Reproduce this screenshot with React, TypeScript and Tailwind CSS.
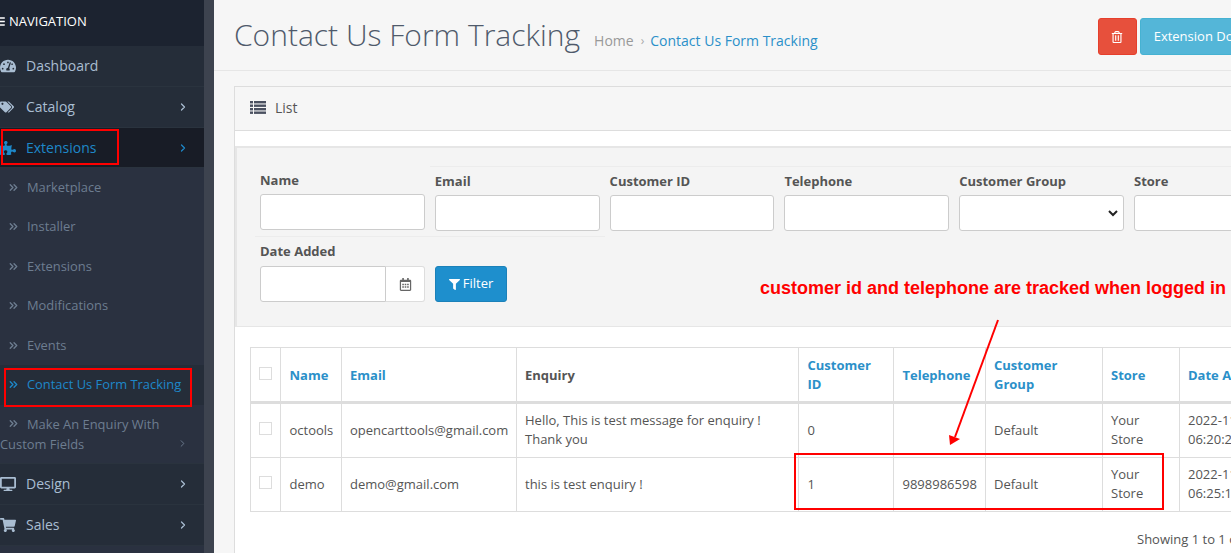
import React from "react";
import { FaTachometerAlt, FaTags, FaPuzzlePiece, FaDesktop, FaShoppingCart, FaRegTrashAlt, FaRegCalendarAlt, FaFilter, FaBars } from "react-icons/fa";
import { ChevronRight, ChevronsRight } from "lucide-react";

function NavItem({ icon, label, arrow, active, h }: { icon: React.ReactNode; label: string; arrow?: boolean; active?: boolean; h: string }) {
  return (
    <div className={`flex items-center ${h} border-b border-[#2a333e] ${active ? "bg-[#181c26] text-[#1e88c9]" : "bg-[#252d39] text-[#a9bdd2]"}`}>
      <span className="w-[26px] shrink-0 text-[16px]">{icon}</span>
      <span className={`text-[14px] flex-1 ${active ? "" : "pb-[2px]"}`}>{label}</span>
      {arrow && <ChevronRight size={12} strokeWidth={2.5} className="mr-[15px]" />}
    </div>
  );
}

function SubItem({ label, active }: { label: string; active?: boolean }) {
  return (
    <div className={`flex items-center h-[39.5px] pl-[7px] text-[12.9px] ${active ? "text-[#1e88c9] bg-[#252d39]" : "text-[#6d7d90]"}`}>
      <ChevronsRight size={13} strokeWidth={2.5} className="mr-[7px]" />
      <span>{label}</span>
    </div>
  );
}

function ListIcon() {
  return (
    <svg width="16" height="13" viewBox="0 0 16 13" className="mr-[9px] text-[#4a5060]" fill="currentColor">
      <rect x="0" y="0" width="3" height="2.4" />
      <rect x="4" y="0" width="12" height="2.4" />
      <rect x="0" y="3.5" width="3" height="2.4" />
      <rect x="4" y="3.5" width="12" height="2.4" />
      <rect x="0" y="7" width="3" height="2.4" />
      <rect x="4" y="7" width="12" height="2.4" />
      <rect x="0" y="10.5" width="3" height="2.4" />
      <rect x="4" y="10.5" width="12" height="2.4" />
    </svg>
  );
}

function Field({ label, lined, select }: { label: string; lined?: boolean; select?: boolean }) {
  return (
    <div className={`w-[174.8px] shrink-0 px-[5px] ${lined ? "border-t border-[#ececec] pt-[6px]" : "pt-[6px]"}`}>
      <div className="h-[22px] leading-[17px] text-[13px] font-bold text-[#555]">{label}</div>
      {select ? (
        <div className="h-[36px] bg-white border border-[#ccc] rounded-[3px] flex items-center justify-end pr-[5px] text-[#333]">
          <svg width="10" height="7" viewBox="0 0 10 7"><path d="M1 1l4 4 4-4" fill="none" stroke="#222" strokeWidth="2" /></svg>
        </div>
      ) : (
        <div className="h-[36px] bg-white border border-[#ccc] rounded-[3px]" />
      )}
    </div>
  );
}

const th = "border border-[#ddd] border-b-[3px] pr-[9px] pt-[1px] text-[13px] font-bold text-left leading-[19px]";
const td = "border border-[#ddd] pr-[9px] pb-[1px] text-[13px] text-[#555] leading-[19px]";
const pa = " pl-[8.5px]";
const pb = " pl-[8px]";
const cb = "block w-[13px] h-[13px] border border-[#ddd] bg-white mx-auto";

export default function App() {
  return (
    <div className="w-[1231px] h-[553px] overflow-hidden relative flex bg-[#f6f6f6] text-[#555]" style={{ fontFamily: '"Open Sans", sans-serif' }}>
      <aside className="w-[214px] shrink-0 border-r-[10px] border-[#3d434f] bg-[#2a3140] overflow-hidden">
        <div className="h-[46px] bg-[#1c2330] text-white text-[13px] flex items-center pb-[3px]">
          <FaBars className="w-[12px] h-[11px] -ml-[6px] mr-[3px]" />
          <span>NAVIGATION</span>
        </div>
        <NavItem icon={<FaTachometerAlt />} label="Dashboard" h="h-[41px]" />
        <NavItem icon={<FaTags className="text-[14px]" />} label="Catalog" arrow h="h-[41px]" />
        <NavItem icon={<FaPuzzlePiece className="text-[#1e88c9]" />} label="Extensions" arrow active h="h-[40px]" />
        <div className="bg-[#2a3140] -mt-[0.5px]">
          <SubItem label="Marketplace" />
          <SubItem label="Installer" />
          <SubItem label="Extensions" />
          <SubItem label="Modifications" />
          <SubItem label="Events" />
          <SubItem label="Contact Us Form Tracking" active />
          <div className="relative h-[59.5px] pt-[9px] text-[12.9px] leading-[20px] text-[#6d7d90] border-b border-[#2a333e]">
            <div className="pl-[7px] flex items-center">
              <ChevronsRight size={13} strokeWidth={2.5} className="mr-[7px]" />
              <span>Make An Enquiry With</span>
            </div>
            <div className="flex items-center justify-between pr-[16px]">
              <span>Custom Fields</span>
              <ChevronRight size={11} strokeWidth={2} />
            </div>
          </div>
        </div>
        <NavItem icon={<FaDesktop />} label="Design" arrow h="h-[41px]" />
        <NavItem icon={<FaShoppingCart />} label="Sales" arrow h="h-[41px]" />
      </aside>

      <main className="flex-1 min-w-0 overflow-hidden">
        <header className="h-[71px] border-b border-[#e6e6e6] flex items-start whitespace-nowrap pl-[20px]">
          <h1 className="text-[30px] font-light text-[#4f5a6b] leading-[40px] mt-[15px]">Contact Us Form Tracking</h1>
          <div className="text-[14px] mt-[31px] ml-[14px] flex items-center leading-[20px]">
            <span className="text-[#999]">Home</span>
            <span className="text-[#aaa] ml-[7px] mr-[6px] text-[12px]">›</span>
            <span className="text-[#2b90c9]">Contact Us Form Tracking</span>
          </div>
          <div className="flex gap-[3px] mt-[18px] ml-[280px]">
            <div className="w-[39px] h-[37px] bg-[#e7503c] border border-[#e63f2c] rounded-[3px] flex items-center justify-center text-white text-[12px]"><FaRegTrashAlt /></div>
            <div className="h-[37px] px-[13px] bg-[#54b6d8] border border-[#46b2d2] rounded-[3px] flex items-center text-white text-[13px]">Extension Document</div>
          </div>
        </header>

        <section className="mt-[15px] ml-[20px] w-[1100px] border border-[#ddd]">
          <div className="h-[44px] border-b border-[#ddd] flex items-center pl-[15px] pb-[2px] text-[14px] text-[#555]">
            <ListIcon />
            <span>List</span>
          </div>
          <div className="bg-white pt-[15px] pb-[20px]">
            <div className="bg-[#f4f4f4] border-t-2 border-l-2 border-b border-[#e6e6e6] h-[181px] pl-[18px]">
              <div className="flex pt-[18px]">
                <Field label="Name" />
                <Field label="Email" lined />
                <Field label="Customer ID" lined />
                <Field label="Telephone" lined />
                <Field label="Customer Group" lined select />
                <Field label="Store" lined />
              </div>
              <div className="flex mt-[5px]">
                <div className="w-[175px] px-[5px] border-t border-[#ececec] pt-[6px]">
                  <div className="h-[23px] leading-[17px] text-[13px] font-bold text-[#555]">Date Added</div>
                  <div className="flex h-[36px]">
                    <div className="w-[126px] bg-white border border-[#ccc] rounded-l-[3px]" />
                    <div className="flex-1 bg-white border border-l-0 border-[#ddd] rounded-r-[3px] flex items-center justify-center text-[#666] text-[13px]"><FaRegCalendarAlt /></div>
                  </div>
                </div>
                <div className="w-[175px] px-[5px] border-t border-[#ececec] pt-[29px]">
                  <div className="w-[72px] h-[36px] bg-[#1e8fcd] border border-[#1b81b9] rounded-[3px] flex items-center justify-center text-white text-[13px]">
                    <FaFilter className="w-[11px] h-[11px] mr-[3px]" />Filter
                  </div>
                </div>
              </div>
            </div>
            <table className="mt-[20px] ml-[15px] border-collapse table-fixed w-[1099px]">
              <colgroup>
                <col className="w-[30px]" /><col className="w-[61px]" /><col className="w-[175px]" /><col className="w-[282px]" />
                <col className="w-[95px]" /><col className="w-[92px]" /><col className="w-[117px]" /><col className="w-[77px]" /><col className="w-[170px]" />
              </colgroup>
              <thead>
                <tr className="h-[55px]">
                  <th className={th + " align-top pt-[19px] !px-0"}><span className={cb} /></th>
                  <th className={th + pa + " text-[#2b90c9]"}>Name</th>
                  <th className={th + pb + " text-[#2b90c9]"}>Email</th>
                  <th className={th + pb + " text-[#555]"}>Enquiry</th>
                  <th className={th + pa + " text-[#2b90c9]"}>Customer<br />ID</th>
                  <th className={th + pa + " text-[#2b90c9]"}>Telephone</th>
                  <th className={th + pb + " text-[#2b90c9]"}>Customer<br />Group</th>
                  <th className={th + pb + " text-[#2b90c9]"}>Store</th>
                  <th className={th + pb + " text-[#2b90c9]"}>Date Added</th>
                </tr>
              </thead>
              <tbody>
                <tr className="h-[55px]">
                  <td className={td + " align-top pt-[18px] !px-0"}><span className={cb} /></td>
                  <td className={td + pa}>octools</td>
                  <td className={td + pb}>opencarttools@gmail.com</td>
                  <td className={td + pb}>Hello, This is test message for enquiry !<br />Thank you</td>
                  <td className={td + pa}>0</td>
                  <td className={td + pa}></td>
                  <td className={td + pb}>Default</td>
                  <td className={td + pb}>Your<br />Store</td>
                  <td className={td + pb}>2022-11-09<br />06:20:25</td>
                </tr>
                <tr className="h-[54px]">
                  <td className={td + " align-top pt-[18px] !px-0"}><span className={cb} /></td>
                  <td className={td + pa}>demo</td>
                  <td className={td + pb}>demo@gmail.com</td>
                  <td className={td + pb}>this is test enquiry !</td>
                  <td className={td + pa}>1</td>
                  <td className={td + pa}>9898986598</td>
                  <td className={td + pb}>Default</td>
                  <td className={td + pb}>Your<br />Store</td>
                  <td className={td + pb}>2022-11-09<br />06:25:15</td>
                </tr>
              </tbody>
            </table>
            <div className="pl-[902px] mt-[17px] text-[13px] leading-[20px] whitespace-nowrap">Showing 1 to 1 of 1 (1 Pages)</div>
          </div>
        </section>
      </main>

      <div className="absolute left-[1px] top-[129px] w-[118px] h-[36px] border-2 border-[#ff0000]" />
      <div className="absolute left-[4px] top-[368px] w-[188px] h-[39px] border-2 border-[#ff0000]" />
      <div className="absolute left-[794px] top-[453px] w-[370px] h-[57px] border-[2.5px] border-[#ff0000]" />
      <div className="absolute left-[760px] top-[277px] text-[18px] leading-[22px] font-bold text-[#ff0000] whitespace-nowrap" style={{ fontFamily: '"Liberation Sans", sans-serif' }}>customer id and telephone are tracked when logged in</div>
      <svg className="absolute left-[940px] top-[315px]" width="70" height="135" viewBox="0 0 70 135">
        <path d="M58 5L15 122" stroke="#ff0000" strokeWidth="2" fill="none" />
        <path d="M10 130L9 120 20 124Z" fill="#ff0000" />
      </svg>
    </div>
  );
}
